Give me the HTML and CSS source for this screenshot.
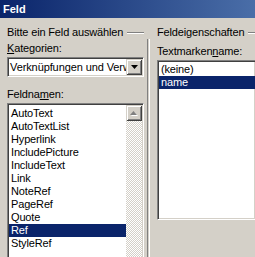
FILE: index.html
```html
<!DOCTYPE html>
<html lang="de">
<head>
    <meta charset="UTF-8">
    <meta name="viewport" content="width=device-width, initial-scale=1.0">
    <title>Feld</title>
    <link rel="stylesheet" href="styles.css">
</head>
<body>
    <div class="window">
        <div class="titlebar">Feld</div>

        <div class="dialog">
            <section class="pane pane-left">
                <div class="group-title"><span>Bitte ein Feld auswählen</span></div>

                <div class="label label-first"><u>K</u>ategorien:</div>
                <div class="combo">
                    <span class="combo-text">Verknüpfungen und Verweise</span>
                    <span class="combo-btn">
                        <svg width="7" height="4" viewBox="0 0 7 4"><path d="M0 0h7L3.5 4z" fill="#000"/></svg>
                    </span>
                </div>

                <div class="label label-list">Feldna<u>m</u>en:</div>
                <div class="listbox">
                    <ul class="list">
                        <li>AutoText</li>
                        <li>AutoTextList</li>
                        <li>Hyperlink</li>
                        <li>IncludePicture</li>
                        <li>IncludeText</li>
                        <li>Link</li>
                        <li>NoteRef</li>
                        <li>PageRef</li>
                        <li>Quote</li>
                        <li class="selected">Ref</li>
                        <li>StyleRef</li>
                    </ul>
                    <div class="scrollbar">
                        <span class="sb-btn">
                            <svg width="8" height="5" viewBox="0 0 8 5">
                                <path d="M4.5 1L8 5H1z" fill="#fff"/>
                                <path d="M3.5 0L7 4H0z" fill="#808080"/>
                            </svg>
                        </span>
                        <span class="sb-track"></span>
                    </div>
                </div>
            </section>

            <div class="divider"></div>

            <section class="pane pane-right">
                <div class="group-title"><span>Feldeigenschaften</span></div>

                <div class="label label-right">Textmarken<u>n</u>ame:</div>
                <div class="listbox listbox-tall">
                    <ul class="list list-right">
                        <li>(keine)</li>
                        <li class="selected">name</li>
                    </ul>
                </div>
            </section>
        </div>
    </div>
</body>
</html>
```

FILE: styles.css
```css
body {
    margin: 0;
    padding: 0;
    background-color: #d4d0c8;
    font-family: "Liberation Sans", Arial, sans-serif;
    font-size: 11px;
    color: #000;
    overflow: hidden;
}

.window {
    width: 255px;
    height: 257px;
}

.titlebar {
    height: 18px;
    line-height: 18px;
    padding-left: 3px;
    color: #fff;
    font-weight: bold;
    background: linear-gradient(to right, #0a246a, #4a6ea8);
}

.dialog {
    display: flex;
    padding-top: 8px;
}

.pane {
    display: flex;
    flex-direction: column;
}

.pane-left {
    width: 137px;
    margin-left: 7px;
}

.pane-right {
    flex: 1;
    min-width: 0;
}

.divider {
    width: 1px;
    margin: 13px 7px 0 3px;
    border-left: 1px solid #808080;
    border-right: 1px solid #fff;
}

.group-title {
    display: flex;
    align-items: center;
    height: 13px;
    line-height: 13px;
    white-space: nowrap;
    letter-spacing: -0.15px;
}

.group-title::after {
    content: "";
    flex: 1;
    margin-left: 4px;
    border-top: 1px solid #808080;
    border-bottom: 1px solid #fff;
}

.label {
    height: 13px;
    line-height: 13px;
    white-space: nowrap;
    letter-spacing: -0.15px;
}

.label-first {
    margin-top: 3px;
}

.label-list {
    margin-top: 11px;
}

.label-right {
    margin-top: 6px;
}

.combo {
    display: flex;
    height: 16px;
    margin-top: 2px;
    background-color: #fff;
    border: 1px solid;
    border-color: #808080 #fff #fff #808080;
    box-shadow: inset 1px 1px #404040, inset -1px -1px #d4d0c8;
    padding: 1px;
}

.combo-text {
    flex: 1;
    min-width: 0;
    overflow: hidden;
    white-space: nowrap;
    line-height: 16px;
    padding-left: 1px;
    letter-spacing: -0.1px;
}

.combo-btn,
.sb-btn {
    display: flex;
    align-items: center;
    justify-content: center;
    width: 16px;
    height: 16px;
    background-color: #d4d0c8;
    box-shadow: inset 1px 1px #d4d0c8, inset -1px -1px #404040,
                inset 2px 2px #fff, inset -2px -2px #808080;
    flex-shrink: 0;
}

.listbox {
    display: flex;
    height: 170px;
    margin-top: 2px;
    background-color: #fff;
    border: 1px solid;
    border-color: #808080 #fff #fff #808080;
    box-shadow: inset 1px 1px #404040, inset -1px -1px #d4d0c8;
    padding: 1px;
}

.listbox-tall {
    height: 156px;
    padding-right: 0;
    border-right: none;
}

.list {
    flex: 1;
    min-width: 0;
    margin: 0;
    padding: 2px 0 0;
    list-style: none;
}

.list-right {
    padding-top: 1px;
}

.list li {
    height: 13px;
    line-height: 13px;
    padding-left: 2px;
    white-space: nowrap;
    letter-spacing: -0.15px;
}

.list li.selected {
    background-color: #0a246a;
    color: #fff;
}

.scrollbar {
    display: flex;
    flex-direction: column;
    width: 16px;
}

.sb-track {
    flex: 1;
    background: repeating-conic-gradient(#fff 0 25%, #d4d0c8 0 50%) 0 0 / 2px 2px;
}
```
